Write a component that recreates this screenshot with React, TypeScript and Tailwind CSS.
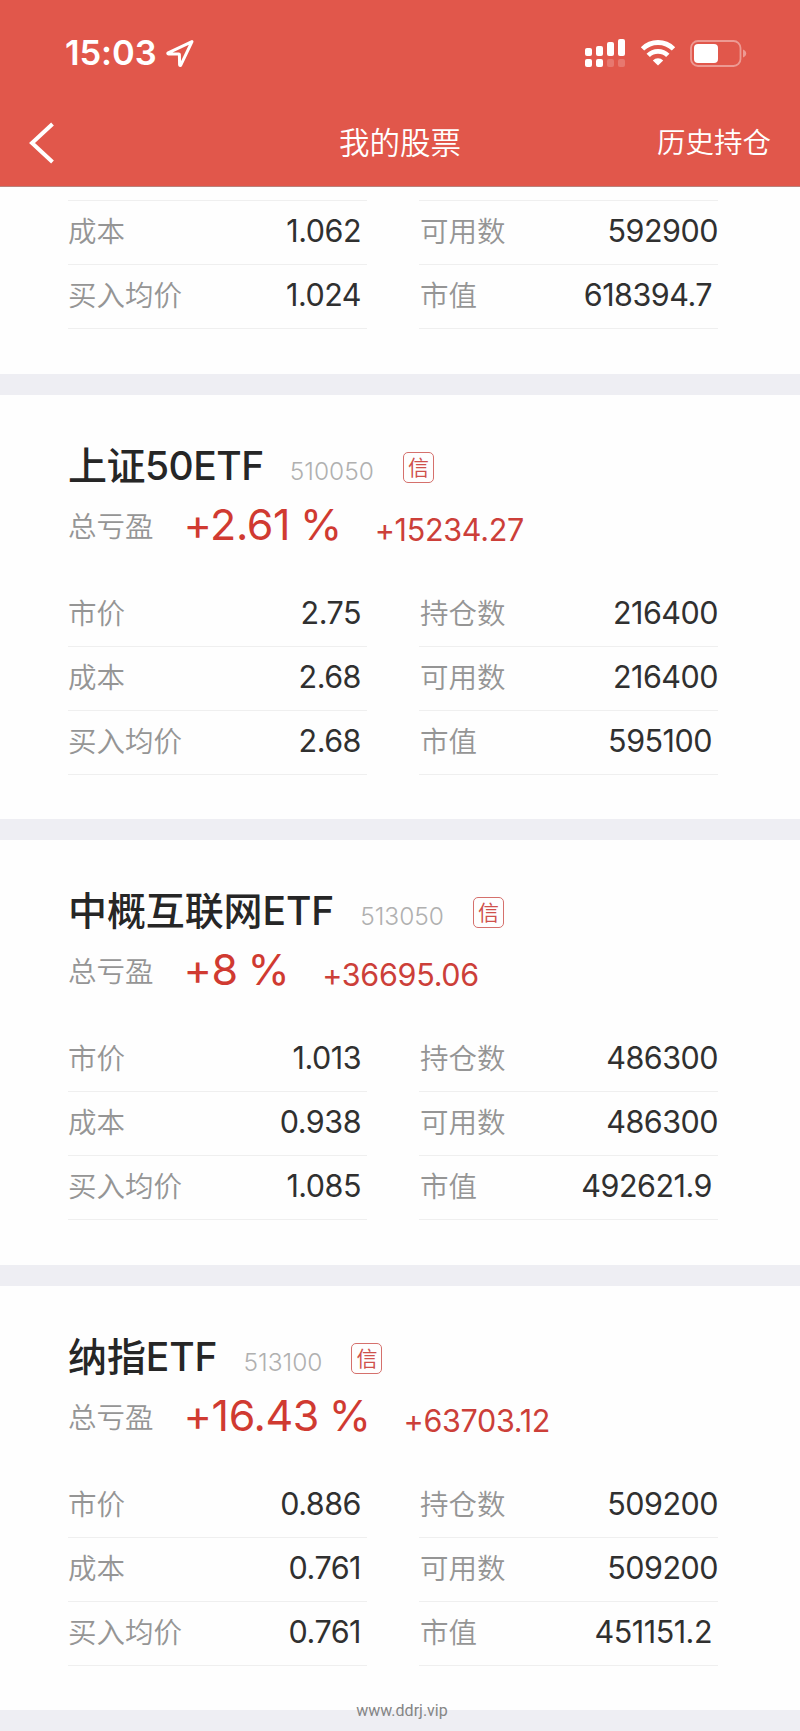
type Row = {
  label: string;
  value: string;
  inset?: boolean;
};

type Stock = {
  name: string;
  tracking: string;
  code: string;
  percent: string;
  amount: string;
  left: Row[];
  right: Row[];
};

const stocks: Stock[] = [
  {
    name: "上证50ETF",
    tracking: "tracking-[-0.5px]",
    code: "510050",
    percent: "+2.61 %",
    amount: "+15234.27",
    left: [
      { label: "市价", value: "2.75" },
      { label: "成本", value: "2.68" },
      { label: "买入均价", value: "2.68" },
    ],
    right: [
      { label: "持仓数", value: "216400" },
      { label: "可用数", value: "216400" },
      { label: "市值", value: "595100", inset: true },
    ],
  },
  {
    name: "中概互联网ETF",
    tracking: "tracking-[-0.1px]",
    code: "513050",
    percent: "+8 %",
    amount: "+36695.06",
    left: [
      { label: "市价", value: "1.013" },
      { label: "成本", value: "0.938" },
      { label: "买入均价", value: "1.085" },
    ],
    right: [
      { label: "持仓数", value: "486300" },
      { label: "可用数", value: "486300" },
      { label: "市值", value: "492621.9", inset: true },
    ],
  },
  {
    name: "纳指ETF",
    tracking: "tracking-[-0.1px]",
    code: "513100",
    percent: "+16.43 %",
    amount: "+63703.12",
    left: [
      { label: "市价", value: "0.886" },
      { label: "成本", value: "0.761" },
      { label: "买入均价", value: "0.761" },
    ],
    right: [
      { label: "持仓数", value: "509200" },
      { label: "可用数", value: "509200" },
      { label: "市值", value: "451151.2", inset: true },
    ],
  },
];

const StatusBar = () => (
  <div className="flex h-[100px] items-start justify-between pl-[65px] pr-[53px] pt-[33px]">
    <div className="flex items-center">
      <span className="text-[34.5px] font-semibold leading-10 tracking-[-0.1px]">
        15:03
      </span>
      <svg className="ml-2 h-[30px] w-[30px]" viewBox="0 0 30 30" fill="none">
        <path
          d="M27 3.6 3.2 14.8c-.7.4-.6 1.1.3 1.1h10.2c.5 0 .7.3.7.7l.2 10c0 1 .9 1.1 1.3.2Z"
          stroke="#fff"
          strokeWidth="3"
          strokeLinejoin="round"
        />
      </svg>
    </div>
    <div className="flex pt-1.5">
      <svg className="h-[29px] w-[41px]" viewBox="0 0 41 29" fill="#fff">
        <rect x="0" y="9" width="7" height="8" rx="2" />
        <rect x="11" y="7" width="7" height="10" rx="2" />
        <rect x="22" y="3" width="7" height="14" rx="2" />
        <rect x="33" y="0" width="7" height="17" rx="2" />
        <rect x="0" y="20" width="7" height="8" rx="2" />
        <rect x="11" y="20" width="7" height="8" rx="2" />
        <rect x="22" y="20" width="7" height="8" rx="2" opacity=".2" />
        <rect x="33" y="20" width="7" height="8" rx="2" opacity=".2" />
      </svg>
      <svg
        className="ml-3.5 mt-px h-[26px] w-[36px]"
        viewBox="0 0 36 26"
        fill="none"
        stroke="#fff"
        strokeWidth="4.8"
      >
        <path d="M2.5 8.9a22 22 0 0 1 31 0" />
        <path d="M8.2 15.4a14 14 0 0 1 19.6 0" />
        <path
          d="M18 25.5 12.8 20.4a7.6 7.6 0 0 1 10.4 0Z"
          fill="#fff"
          stroke="none"
        />
      </svg>
      <svg className="ml-3.5 mt-px h-[27px] w-[57px]" viewBox="0 0 57 27">
        <rect
          x="1"
          y="1"
          width="49.5"
          height="25"
          rx="7"
          fill="none"
          stroke="#fff"
          strokeOpacity=".4"
          strokeWidth="1.8"
        />
        <path d="M53 9.5c4.3 1.5 4.3 6.5 0 8Z" fill="#fff" opacity=".4" />
        <rect x="4" y="4" width="24" height="19" rx="4" fill="#fff" />
      </svg>
    </div>
  </div>
);

const Header = () => (
  <header className="h-[187px] border-b border-[#b9827c] bg-[#e1574b] text-white">
    <StatusBar />
    <div className="grid h-[85px] grid-cols-[1fr_auto_1fr] items-center px-[29px]">
      <svg className="h-[42px] w-[26px]" viewBox="0 0 26 42" fill="none">
        <path d="M23.5 2 3 21 23.5 40" stroke="#fff" strokeWidth="4" />
      </svg>
      <h1 className="text-[30.5px] font-[350] leading-10">我的股票</h1>
      <span className="justify-self-end text-[28.5px] font-[350] leading-10">
        历史持仓
      </span>
    </div>
  </header>
);

const Column = ({ rows }: { rows: Row[] }) => (
  <div>
    {rows.map((row) => (
      <div
        key={row.label}
        className="flex h-16 items-baseline justify-between border-b border-[#efefef] pt-2.5"
      >
        <span className="text-[28.5px] font-[350] leading-10 text-[#959595]">
          {row.label}
        </span>
        <span
          className={`text-[30.5px] leading-10 tracking-[-0.5px] text-[#303030] ${
            row.inset ? "pr-1.5" : ""
          }`}
        >
          {row.value}
        </span>
      </div>
    ))}
  </div>
);

const Details = ({ left, right }: { left: Row[]; right: Row[] }) => (
  <div className="grid grid-cols-[299px_299px] gap-x-[52px] pl-[68px]">
    <div className="[&_span:last-child]:mr-[6px]">
      <Column rows={left} />
    </div>
    <div className="[&_span:first-child]:ml-px">
      <Column rows={right} />
    </div>
  </div>
);

const StockCard = ({ stock }: { stock: Stock }) => (
  <section className="h-[445.5px] border-b-[21px] border-[#eeeef3]">
    <div className="flex h-[98px] items-baseline pl-[68px] pt-[47px]">
      <h2
        className={`text-[39px] font-medium leading-[48px] text-[#262626] ${stock.tracking}`}
      >
        {stock.name}
      </h2>
      <span className="ml-[26px] text-[24.5px] font-light text-[#b0b0b0]">
        {stock.code}
      </span>
      <span className="ml-[29px] flex h-[31px] w-[31px] -translate-y-[5px] items-center justify-center rounded-[5px] border-[1.5px] border-[#d5706c] text-[21px] leading-none text-[#cf514c]">
        信
      </span>
    </div>
    <div className="flex h-[90px] items-baseline pl-[68px]">
      <span className="-translate-y-[3px] text-[28.5px] font-[350] text-[#959595]">
        总亏盈
      </span>
      <span className="ml-[30px] text-[43px] leading-[62px] tracking-[-0.4px] text-[#d03a31] [word-spacing:-2px]">
        {stock.percent}
      </span>
      <span className="ml-[33px] translate-y-px text-[30.5px] tracking-[-0.3px] text-[#cc3f39]">
        {stock.amount}
      </span>
    </div>
    <Details left={stock.left} right={stock.right} />
  </section>
);

export default function App() {
  return (
    <div className="relative h-[1731px] w-[800px] overflow-hidden bg-[#fefefe] font-['Inter','Noto_Sans_CJK_SC',sans-serif]">
      <Header />
      {/* tail of the card scrolled under the header */}
      <section className="h-[207.5px] border-b-[21px] border-[#eeeef3]">
        <div className="grid grid-cols-[299px_299px] gap-x-[52px] pl-[68px] pt-[13px]">
          <div className="h-px bg-[#efefef]" />
          <div className="h-px bg-[#efefef]" />
        </div>
        <Details
          left={[
            { label: "成本", value: "1.062" },
            { label: "买入均价", value: "1.024" },
          ]}
          right={[
            { label: "可用数", value: "592900" },
            { label: "市值", value: "618394.7", inset: true },
          ]}
        />
      </section>
      {stocks.map((stock) => (
        <StockCard key={stock.code} stock={stock} />
      ))}
      <span className="absolute bottom-[10px] left-[402px] -translate-x-1/2 font-['Roboto',sans-serif] text-[16px] leading-5 text-[#858585]">
        www.ddrj.vip
      </span>
    </div>
  );
}
